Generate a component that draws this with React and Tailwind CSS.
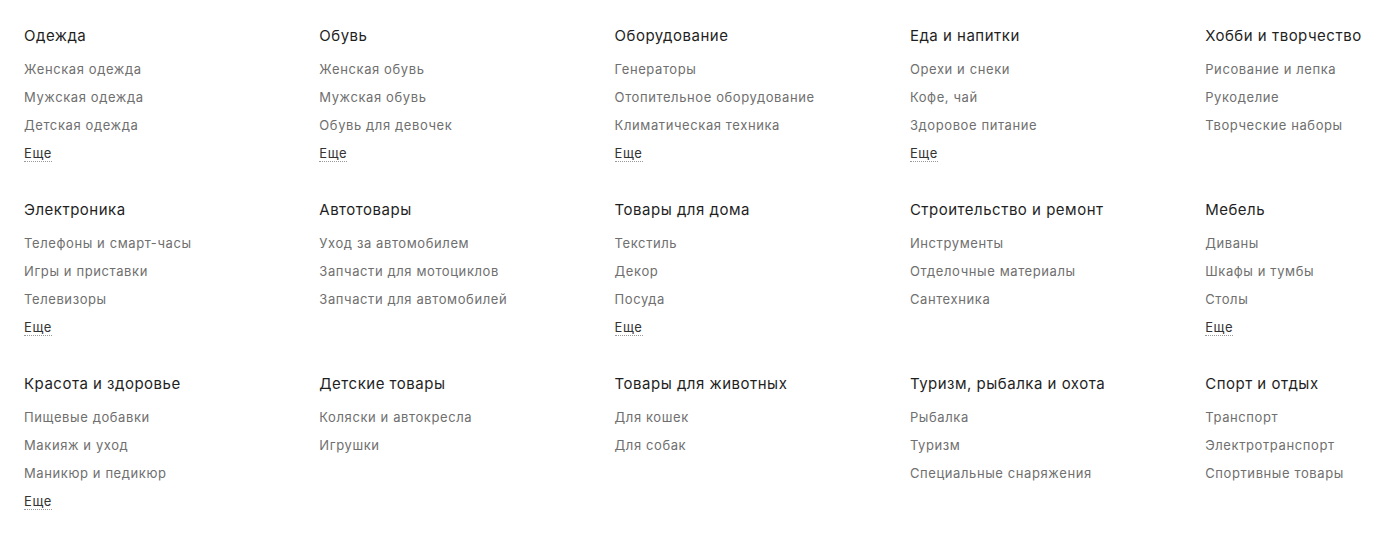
const sections = [
  { title: "Одежда", items: ["Женская одежда", "Мужская одежда", "Детская одежда"], more: true },
  { title: "Обувь", items: ["Женская обувь", "Мужская обувь", "Обувь для девочек"], more: true },
  { title: "Оборудование", items: ["Генераторы", "Отопительное оборудование", "Климатическая техника"], more: true },
  { title: "Еда и напитки", items: ["Орехи и снеки", "Кофе, чай", "Здоровое питание"], more: true },
  { title: "Хобби и творчество", items: ["Рисование и лепка", "Рукоделие", "Творческие наборы"], more: false },
  { title: "Электроника", items: ["Телефоны и смарт-часы", "Игры и приставки", "Телевизоры"], more: true },
  { title: "Автотовары", items: ["Уход за автомобилем", "Запчасти для мотоциклов", "Запчасти для автомобилей"], more: false },
  { title: "Товары для дома", items: ["Текстиль", "Декор", "Посуда"], more: true },
  { title: "Строительство и ремонт", items: ["Инструменты", "Отделочные материалы", "Сантехника"], more: false },
  { title: "Мебель", items: ["Диваны", "Шкафы и тумбы", "Столы"], more: true },
  { title: "Красота и здоровье", items: ["Пищевые добавки", "Макияж и уход", "Маникюр и педикюр"], more: true },
  { title: "Детские товары", items: ["Коляски и автокресла", "Игрушки"], more: false },
  { title: "Товары для животных", items: ["Для кошек", "Для собак"], more: false },
  { title: "Туризм, рыбалка и охота", items: ["Рыбалка", "Туризм", "Специальные снаряжения"], more: false },
  { title: "Спорт и отдых", items: ["Транспорт", "Электротранспорт", "Спортивные товары"], more: false },
]

function Section({ title, items, more }) {
  return (
    <div className="flex flex-col">
      <h3 className="text-[15px] leading-5 tracking-[0.5px] text-[#1f1f1f] whitespace-nowrap">{title}</h3>
      <ul className="mt-[9px] flex flex-col">
        {items.map((i) => (
          <li key={i} className="text-[13px] leading-7 tracking-[0.6px] text-[#6f6f6f] whitespace-nowrap">
            {i}
          </li>
        ))}
        {more && (
          <li className="pt-px">
            <a className="text-[13px] leading-[27px] tracking-[0.6px] text-[#333] border-b border-dotted border-[#999]">Еще</a>
          </li>
        )}
      </ul>
    </div>
  )
}

export default function App() {
  return (
    <div
      className="w-full h-[551px] bg-white overflow-hidden pl-6 pt-[26px]"
      style={{ fontFamily: "Inter, 'Noto Sans', sans-serif" }}
    >
      <div className="grid grid-cols-[repeat(5,295.3px)] gap-y-[33px] items-start">
        {sections.map((s) => (
          <Section key={s.title} {...s} />
        ))}
      </div>
    </div>
  )
}
